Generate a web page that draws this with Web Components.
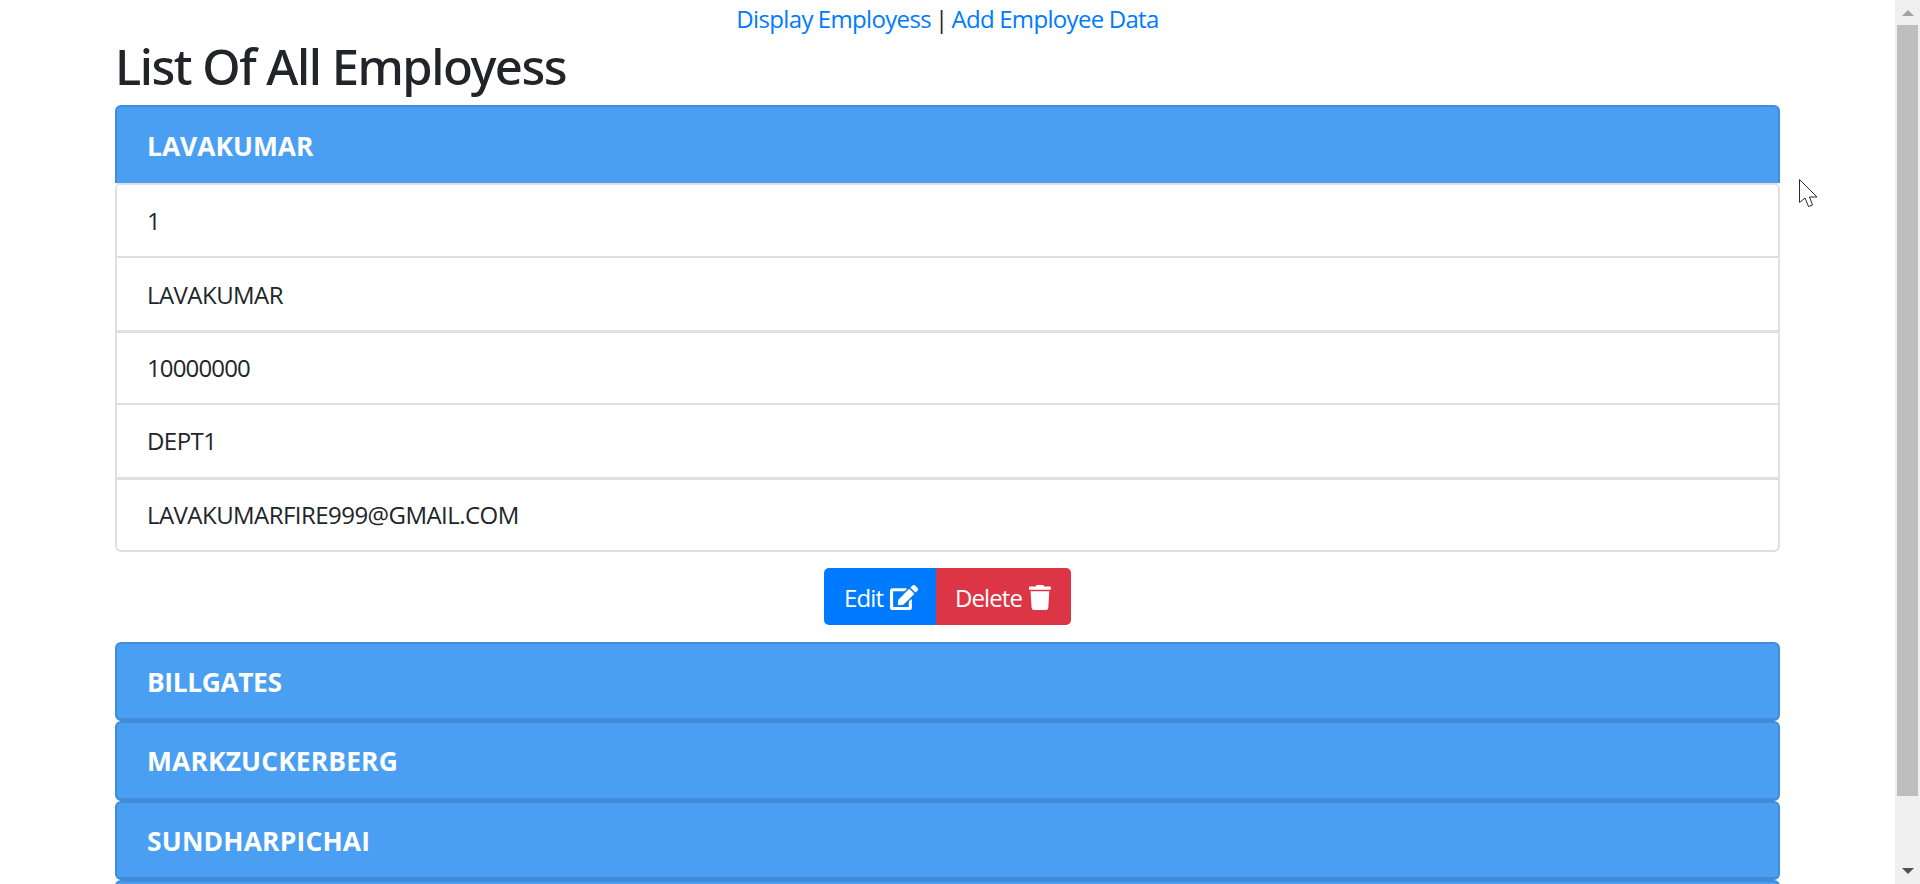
<!DOCTYPE html>
<html lang="en">
<head>
<meta charset="utf-8">
<title>List Of All Employess</title>
<style>
  html, body { margin: 0; height: 884px; overflow: hidden; background: #fff; }
  body { font-family: "Open Sans", "Noto Sans", sans-serif; color: #212529; }
</style>
</head>
<body>
<emp-page>
  <top-nav></top-nav>
  <emp-title>List Of All Employess</emp-title>
  <emp-card name="LAVAKUMAR" open>
    <emp-row>1</emp-row>
    <emp-row>LAVAKUMAR</emp-row>
    <emp-row style="letter-spacing: -0.85px">10000000</emp-row>
    <emp-row>DEPT1</emp-row>
    <emp-row>LAVAKUMARFIRE999@GMAIL.COM</emp-row>
  </emp-card>
  <emp-actions></emp-actions>
  <emp-card name="BILLGATES" style="letter-spacing: -0.4px"></emp-card>
  <emp-card name="MARKZUCKERBERG" style="letter-spacing: 0.15px"></emp-card>
  <emp-card name="SUNDHARPICHAI" style="letter-spacing: 0.2px"></emp-card>
  <emp-card></emp-card>
</emp-page>
<script>
// page frame: content column + scrollbar on the right
class EmpPage extends HTMLElement {
  constructor() {
    super();
    this.attachShadow({ mode: 'open' });
    this.shadowRoot.innerHTML = `
    <style>
    :host { display: flex; height: 884px; position: relative; overflow: hidden; }
    main { flex: 1; min-width: 0; height: 884px; overflow: hidden; box-sizing: border-box; padding: 0 115px; }
    .cursor { position: absolute; left: 1799px; top: 179px; }
    </style>
    <main><slot></slot></main>
    <page-scrollbar></page-scrollbar>
    <svg class="cursor" width="19" height="29" viewBox="0 0 19 29">
      <path d="M0.5 0.5V23.5L6 19L9.500 27.500L13.500 26L10.500 18H18Z" fill="#fff" stroke="#2a2a33" stroke-width="1"/>
    </svg>`;
  }
}

class TopNav extends HTMLElement {
  constructor() {
    super();
    this.attachShadow({ mode: 'open' });
    this.shadowRoot.innerHTML = `
    <style>
    :host { display: flex; justify-content: center; gap: 4px; box-sizing: border-box; margin: 0 -115px; height: 36px; padding-top: 1px; line-height: 36px; font-size: 24px; letter-spacing: -0.65px; word-spacing: -0.6px; color: #212529; }
    a { color: #007bff; text-decoration: none; }
    </style>
    <a href="#">Display Employess</a><span>|</span><a href="#">Add Employee Data</a>`;
  }
}

class EmpTitle extends HTMLElement {
  constructor() {
    super();
    this.attachShadow({ mode: 'open' });
    this.shadowRoot.innerHTML = `
    <style>
    :host { display: block; margin-bottom: 9px; font-family: "Noto Sans", "Open Sans", sans-serif; font-size: 49px; line-height: 60px; font-weight: 500; letter-spacing: -1.5px; color: #212529; }
    </style>
    <slot></slot>`;
  }
}

class EmpCard extends HTMLElement {
  constructor() {
    super();
    this.attachShadow({ mode: 'open' });
    this.shadowRoot.innerHTML = `
    <style>
    :host { display: block; }
    .head {
      box-sizing: border-box; height: 79.500px; padding: 1px 30px 0;
      display: flex; align-items: center;
      background: #4a9ff3; border: 2px solid #418cd8; border-bottom-width: 3px; border-radius: 6px;
      color: #fff; font-size: 26.400px; font-weight: 700;
    }
    :host([open]) .head { height: 78px; border-bottom: 0; border-radius: 6px 6px 0 0; }
    .body { display: none; border: 2px solid #dfdfdf; border-top: 0; border-radius: 6px; }
    :host([open]) .body { display: block; }
    </style>
    <div class="head"></div>
    <div class="body"><slot></slot></div>`;
    this.shadowRoot.querySelector('.head').textContent = this.getAttribute('name') || '';
  }
}

class EmpRow extends HTMLElement {
  constructor() {
    super();
    this.attachShadow({ mode: 'open' });
    this.shadowRoot.innerHTML = `
    <style>
    :host { display: flex; align-items: center; box-sizing: border-box; height: 73.400px; padding: 0 30px; font-size: 24px; letter-spacing: -0.55px; border-top: 2px solid #dfdfdf; color: #212529; }
    :host(:nth-child(3)), :host(:nth-child(5)) { border-top-width: 3px; }
    </style>
    <slot></slot>`;
  }
}

class EmpActions extends HTMLElement {
  constructor() {
    super();
    this.attachShadow({ mode: 'open' });
    this.shadowRoot.innerHTML = `
    <style>
    :host { display: flex; justify-content: center; margin: 16px 0 17px; }
    a { display: flex; align-items: center; gap: 7px; box-sizing: border-box; height: 57px; padding: 2px 0 0 20px; color: #fff; text-decoration: none; font-size: 24px; letter-spacing: -0.9px; }
    .edit { background: #007bff; border-radius: 5px 0 0 5px; width: 112px; }
    .del { background: #dc3545; border-radius: 0 5px 5px 0; width: 135px; padding-left: 19px; }
    svg { fill: #fff; height: 25px; display: block; flex: none; }
    </style>
    <a class="edit" href="#">Edit
      <svg viewBox="0 0 576 512"><path d="M402.6 83.2l90.2 90.2c3.8 3.8 3.8 10 0 13.8L274.4 405.6l-92.8 10.3c-12.4 1.4-22.9-9.1-21.5-21.5l10.3-92.8L388.8 83.2c3.8-3.8 10-3.8 13.8 0zm162-22.9l-48.8-48.8c-15.2-15.2-39.9-15.2-55.2 0l-35.4 35.4c-3.8 3.8-3.8 10 0 13.8l90.2 90.2c3.8 3.8 10 3.8 13.8 0l35.4-35.4c15.2-15.3 15.2-40 0-55.2zM384 346.2V448H64V128h229.8c3.2 0 6.2-1.3 8.5-3.5l40-40c7.6-7.6 2.2-20.5-8.5-20.5H48C21.5 64 0 85.5 0 112v352c0 26.5 21.5 48 48 48h352c26.5 0 48-21.5 48-48V306.2c0-10.7-12.9-16-20.5-8.5l-40 40c-2.2 2.3-3.5 5.3-3.500 8.500z"/></svg>
    </a>
    <a class="del" href="#">Delete
      <svg viewBox="0 0 448 512"><path d="M432 32H312l-9.4-18.7A24 24 0 0 0 281.100 0H166.800a23.720 23.720 0 0 0-21.400 13.300L136 32H16A16 16 0 0 0 0 48v32a16 16 0 0 0 16 16h416a16 16 0 0 0 16-16V48a16 16 0 0 0-16-16zM53.200 467a48 48 0 0 0 47.900 45h245.800a48 48 0 0 0 47.900-45L416 128H32z"/></svg>
    </a>`;
  }
}

// drawn scrollbar, the page itself does not scroll
class PageScrollbar extends HTMLElement {
  constructor() {
    super();
    this.attachShadow({ mode: 'open' });
    this.shadowRoot.innerHTML = `
    <style>
    :host { display: flex; flex-direction: column; align-items: center; flex: none; width: 25px; height: 884px; background: #f0f0f0; box-sizing: border-box; }
    .up, .down { width: 0; height: 0; border-left: 6px solid transparent; border-right: 6px solid transparent; }
    .up { margin-top: 10px; border-bottom: 6px solid #a3a3a3; }
    .thumb { width: 21px; height: 771px; margin-top: 9px; background: #bebebe; }
    .down { margin-top: 72px; border-top: 6px solid #505050; }
    </style>
    <div class="up"></div>
    <div class="thumb"></div>
    <div class="down"></div>`;
  }
}

customElements.define('emp-page', EmpPage);
customElements.define('top-nav', TopNav);
customElements.define('emp-title', EmpTitle);
customElements.define('emp-card', EmpCard);
customElements.define('emp-row', EmpRow);
customElements.define('emp-actions', EmpActions);
customElements.define('page-scrollbar', PageScrollbar);
</script>
</body>
</html>
